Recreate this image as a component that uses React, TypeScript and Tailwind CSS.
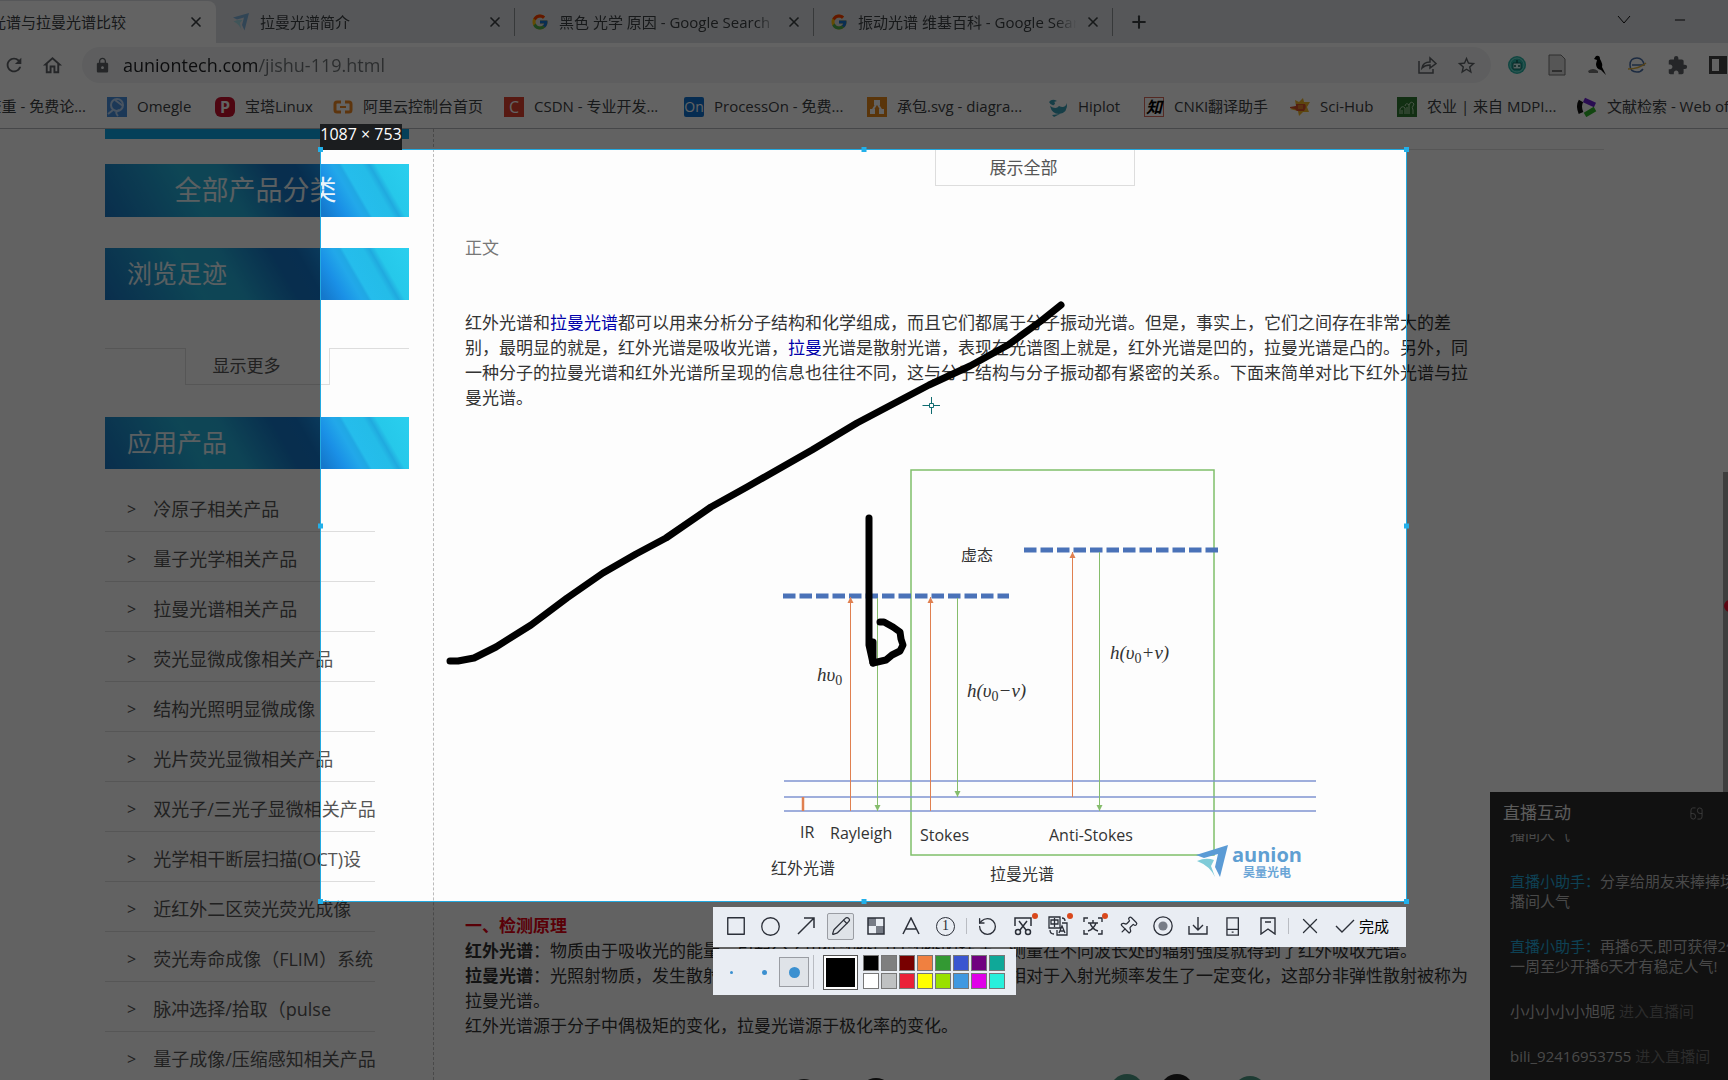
import type { ReactNode } from "react";
import {
  Check,
  Circle,
  CircleDot,
  Download,
  Minus,
  Pencil,
  Pin,
  Plus,
  RotateCcw,
  Square,
  X,
} from "lucide-react";
import { FcGoogle } from "react-icons/fc";
import { MdExtension, MdLock, MdOutlineHome, MdRefresh, MdStarBorder } from "react-icons/md";
import clsx from "clsx";

function AunionMark({ className }: { className?: string }) {
  return (
    <svg viewBox="0 0 32 36" className={className}>
      <path d="M0 9 L32 0 L23 35 L18 24 L22 9 L8 13 Z" fill="#7fb2dc" />
      <path d="M1 17 Q10 12 19 14 L14 20 L17 35 Q13 22 1 17 Z" fill="#a5dbe4" />
    </svg>
  );
}

const tabs = [
  { title: "拉曼光谱简介", icon: <AunionMark className="size-[18px]" /> },
  { title: "黑色 光学 原因 - Google Search", icon: <FcGoogle size={18} /> },
  { title: "振动光谱 维基百科 - Google Search", icon: <FcGoogle size={18} /> },
];

function TabStrip() {
  return (
    <div className="flex h-[43px] items-center bg-[#dee1e6] pt-px">
      <div className="flex h-full w-[216px] shrink-0 items-center justify-end rounded-tr-lg bg-white pr-3">
        <button className="whitespace-nowrap">红外光谱与拉曼光谱比较</button>
        <button aria-label="关闭标签页" className="ml-[62px]"><X size={16} strokeWidth={2.5} /></button>
      </div>
      {tabs.map((tab) => (
        <div key={tab.title} className="flex h-7 w-[299px] shrink-0 items-center border-r border-[#8f9296] pr-[11px] pl-4">
          {tab.icon}
          <button className="ml-[10px] min-w-0 flex-1 overflow-hidden mask-r-from-90% text-left whitespace-nowrap">{tab.title}</button>
          <button aria-label="关闭标签页" className="ml-2"><X size={16} strokeWidth={2.5} /></button>
        </div>
      ))}
      <button aria-label="打开新标签页" className="ml-4"><Plus size={20} strokeWidth={2.5} /></button>
      <div className="ml-auto flex items-center gap-[41px] pr-10 pb-1">
        <svg viewBox="0 0 14 8" className="w-[14px]" fill="none" stroke="#111"><path d="M1 0 L7 7 L13 0" /></svg>
        <Minus size={16} strokeWidth={1.5} color="#111" />
      </div>
    </div>
  );
}

function AddressBar() {
  return (
    <div className="flex h-[44px] items-center pl-[3px] text-[#5f6368]">
      <button aria-label="重新加载"><MdRefresh size={22} /></button>
      <button aria-label="主页" className="ml-4"><MdOutlineHome size={23} /></button>
      <div className="ml-[18px] flex h-9 flex-1 items-center rounded-full bg-[#f1f3f4] pr-[14px] pl-3">
        <MdLock size={17} />
        <input
          aria-label="地址栏"
          defaultValue="auniontech.com/jishu-119.html"
          className="ml-3 min-w-0 flex-1 bg-[linear-gradient(90deg,#202124_136px,#6f7377_136px)] bg-clip-text text-lg text-transparent outline-none"
        />
        <svg viewBox="0 0 20 20" className="mr-[19px] size-5" fill="none" stroke="#5f6368" strokeWidth="1.5">
          <path d="M2 6 V18 H16 V14" />
          <path d="M5 13 Q6 7 13 7 V3 L19 8.500 L13 13 V10 Q8 10 5 13 Z" />
        </svg>
        <MdStarBorder size={21} />
      </div>
      <div className="flex items-center gap-5 pl-4">
        <svg viewBox="0 0 20 20" className="size-5">
          <circle cx="10" cy="10" r="9" fill="#2bb5a8" />
          <circle cx="10" cy="10" r="7" fill="none" stroke="#7fe0d6" />
          <path d="M6 8 H14 V14 H6 Z" fill="#d9fffa" stroke="#0f6b66" />
          <path d="M7 11 H9 M11 11 H13 M10 5 V8" stroke="#0f5f5a" strokeWidth="1.5" />
        </svg>
        <svg viewBox="0 0 20 22" className="h-[22px] w-5" fill="none" stroke="#777">
          <path d="M2 1 H14 L18 5 V21 H2 Z" fill="#ddd" />
          <path d="M5 17 H15" strokeWidth="2" />
        </svg>
        <svg viewBox="0 0 20 20" className="size-5">
          <path d="M1 16 Q6 12 11 16 L11 18 H2 Z" fill="#777" />
          <path d="M9 1 Q13 0 13 4 Q16 9 15 12 L19 20 L14 15 Q9 14 9 9 L10 5 L7 4 Z" fill="#000" />
        </svg>
        <svg viewBox="0 0 20 20" className="size-5" fill="none" strokeWidth="1.5">
          <path d="M5 10 H17 Q16 3 10 3 Q3 3 3 10 Q3 17 10 17 Q14 17 16 14" stroke="#4a6fa8" />
          <path d="M1 14 Q12 14 19 8" stroke="#e0b03a" />
        </svg>
        <MdExtension size={21} />
        <svg viewBox="0 0 20 20" className="size-5"><path d="M1 1 H19 V19 H1 Z M4 4 V16 H11 V4 Z" fill="#444" fillRule="evenodd" /></svg>
      </div>
    </div>
  );
}

function Favicon({ bg, children }: { bg: string; children: ReactNode }) {
  return <span className={clsx("flex size-5 shrink-0 items-center justify-center text-base leading-5 text-white", bg)}>{children}</span>;
}

const bookmarks: { label: string; width: string; icon: ReactNode }[] = [
  {
    label: "Omegle",
    width: "w-[108px]",
    icon: (
      <Favicon bg="bg-[#4a90e0]">
        <svg viewBox="0 0 20 20" className="size-5" fill="none" stroke="#bcd8f8" strokeWidth="2">
          <circle cx="10" cy="8" r="6" />
          <path d="M12 13 Q7 15 11 19 M1 17 L6 13 M8 3 L16 9" />
        </svg>
      </Favicon>
    ),
  },
  { label: "宝塔Linux", width: "w-[118px]", icon: <Favicon bg="bg-[#c8102e] rounded-md font-bold">P</Favicon> },
  {
    label: "阿里云控制台首页",
    width: "w-[171px]",
    icon: (
      <svg viewBox="0 0 20 20" className="size-5 shrink-0" fill="none" stroke="#f08a24" strokeWidth="3">
        <path d="M8 5 H4 Q2 5 2 7 V13 Q2 15 4 15 H8 M12 5 H16 Q18 5 18 7 V13 Q18 15 16 15 H12" />
        <path d="M7 10 H13" strokeWidth="2" />
      </svg>
    ),
  },
  { label: "CSDN - 专业开发...", width: "w-[180px]", icon: <Favicon bg="bg-[#e0402f]">C</Favicon> },
  { label: "ProcessOn - 免费...", width: "w-[183px]", icon: <Favicon bg="bg-[#1173d0] rounded-xs"><span className="text-sm">On</span></Favicon> },
  {
    label: "承包.svg - diagra...",
    width: "w-[181px]",
    icon: (
      <Favicon bg="bg-[#e88a1a]">
        <svg viewBox="0 0 20 20" className="size-5">
          <path d="M10 6 L5 14 M10 6 L15 14" stroke="#fff" strokeWidth="2" />
          <path d="M7 3 H13 V8 H7 Z M3 12 H8 V17 H3 Z M12 12 H17 V17 H12 Z" fill="#fff" />
        </svg>
      </Favicon>
    ),
  },
  {
    label: "Hiplot",
    width: "w-[96px]",
    icon: (
      <svg viewBox="0 0 20 20" className="size-5 shrink-0" fill="#3aa0b8">
        <path d="M2 9 Q8 13 11 9 Q17 12 19 6 Q20 16 11 17 Q4 17 2 9 Z" />
        <path d="M1 5 Q4 1 9 4 L6 5 Q8 6 6 8 Q3 9 1 5 Z M4 18 L12 17 L6 20 Z" />
      </svg>
    ),
  },
  {
    label: "CNKI翻译助手",
    width: "w-[146px]",
    icon: <span className="flex size-5 shrink-0 items-center justify-center border border-[#d96a5a] text-base leading-4 font-bold text-black italic">知</span>,
  },
  {
    label: "Sci-Hub",
    width: "w-[107px]",
    icon: (
      <svg viewBox="0 0 20 20" className="size-5 shrink-0">
        <path d="M5 3 L9 5 L13 1 L14 5 L20 5 L17 10 L19 15 L13 15 L9 19 L8 14 L0 12 L6 9 Z" fill="#f0b428" />
        <path d="M0 10 L6 9 V7 H15 Q17 10 14 14 H7 L5 12 L0 11 Z" fill="#d9502a" />
        <path d="M8 9 H13 M8 11 H13" stroke="#f0b428" />
      </svg>
    ),
  },
  {
    label: "农业 | 来自 MDPI...",
    width: "w-[180px]",
    icon: (
      <Favicon bg="bg-[#2f7a33]">
        <svg viewBox="0 0 20 20" className="size-5" fill="none" stroke="#b9d9b4">
          <path d="M3 17 V12 Q5 8 8 11 V17 M8 9 Q9 5 12 8 V17 M12 8 Q14 3 17 7 Q14 11 16 13 V17 M5 17 V13 M10 17 V10" />
        </svg>
      </Favicon>
    ),
  },
  {
    label: "文献检索 - Web of Science",
    width: "w-[240px]",
    icon: (
      <svg viewBox="0 0 20 20" className="size-5 shrink-0" fill="none" strokeWidth="5">
        <path d="M4 4 Q1 9 4 16" stroke="#111" />
        <path d="M7 3 L18 8" stroke="#6a1fd0" />
        <path d="M8 18 L18 12" stroke="#30b52b" />
      </svg>
    ),
  },
];

function BookmarkBar() {
  return (
    <nav className="flex h-[42px] items-center overflow-hidden border-b border-[#b5b8bc] pb-[2px] whitespace-nowrap text-[#3c4043]">
      <a href="#" className="flex w-[107px] shrink-0 justify-end pr-[21px]">查重 - 免费论...</a>
      {bookmarks.map((b) => (
        <a key={b.label} href="#" className={clsx("flex shrink-0 items-center gap-[10px]", b.width)}>
          {b.icon}
          {b.label}
        </a>
      ))}
    </nav>
  );
}

function Banner({ title, main }: { title: string; main?: boolean }) {
  return (
    <h2
      className={clsx(
        "flex items-center bg-[linear-gradient(60deg,#1976c4_0%,#24b4dc_30%,#25b0dc_42%,#1678c8_58%,#1478cc_66%,#1a90e6_72%,#22a8ea_77%,#20a8e4_79%,#25bdec_80%,#24bce8_86%,#20aadf_88%,#26c8ea_90%,#2acfee_100%)] text-[#e8f4fa]",
        main ? "h-[53px] justify-center pr-[3px] text-[27px]" : "h-[52px] pl-[22px] text-[25px]"
      )}
    >
      {title}
    </h2>
  );
}

function MoreTab({ label, wide }: { label: string; wide?: boolean }) {
  return (
    <div className="flex">
      <div className={clsx("h-px bg-[#ddd]", wide ? "flex-1" : "w-20")} />
      <button className={clsx("h-[37px] border border-t-0 border-[#ddd] pr-[22px] text-[#555]", wide ? "w-[200px]" : "w-[145px]")}>
        {label}
      </button>
      <div className="h-px flex-1 bg-[#ddd]" />
    </div>
  );
}

const products = [
  "冷原子相关产品",
  "量子光学相关产品",
  "拉曼光谱相关产品",
  "荧光显微成像相关产品",
  "结构光照明显微成像",
  "光片荧光显微相关产品",
  "双光子/三光子显微相关产品",
  "光学相干断层扫描(OCT)设",
  "近红外二区荧光荧光成像",
  "荧光寿命成像（FLIM）系统",
  "脉冲选择/拾取（pulse",
  "量子成像/压缩感知相关产品",
];

function Sidebar() {
  return (
    <aside className="w-[304px] shrink-0 text-[#555]">
      <div className="h-[10px] bg-[#0da4e6]" />
      <div className="mt-[25px]"><Banner title="全部产品分类" main /></div>
      <div className="mt-[31px]"><Banner title="浏览足迹" /></div>
      <div className="mt-12"><MoreTab label="显示更多" /></div>
      <div className="mt-8"><Banner title="应用产品" /></div>
      <ul className="mt-[13px] w-[270px]">
        {products.map((p) => (
          <li key={p} className="h-[50px] border-b border-[#ddd]">
            <a href="#" className="flex h-full items-center gap-[17px] pt-1 pl-[22px] text-lg whitespace-nowrap">
              <span className="text-base">&gt;</span>
              {p}
            </a>
          </li>
        ))}
      </ul>
    </aside>
  );
}

function Arrow({ x, from, to, color }: { x: number; from: number; to: number; color: string }) {
  const d = to > from ? -6 : 6;
  return (
    <g stroke={color} fill={color}>
      <path d={`M${x} ${from} V${to}`} />
      <path d={`M${x} ${to} l-3 ${d} h6 Z`} stroke="none" />
    </g>
  );
}

function Formula({ x, y, sign }: { x: number; y: number; sign?: string }) {
  return (
    <text x={x} y={y} fontSize="19" fontStyle="italic" className="font-['Liberation_Serif',serif]">
      {sign ? "h(υ" : "hυ"}
      <tspan fontSize="14" fontStyle="normal" dy="4">0</tspan>
      {sign && <tspan dy="-4">{sign}v)</tspan>}
    </text>
  );
}

function RamanDiagram() {
  const orange = "#e08050";
  const green = "#86bd6c";
  return (
    <svg viewBox="465 410 1000 503" className="h-[503px] w-[1000px]" fill="#333" fontSize="16">
      <rect x="911" y="470" width="303" height="385" fill="none" stroke="#7fbf6a" strokeWidth="1.500" />
      <g stroke="#4a72b8" strokeWidth="5" strokeDasharray="12.500 4">
        <path d="M783 596 H1009" />
        <path d="M1024 550 H1220" />
      </g>
      <g stroke="#7f93d0" strokeWidth="1.500">
        <path d="M784 781 H1316" />
        <path d="M784 797 H1316" />
        <path d="M784 811 H1316" />
      </g>
      <path d="M803 797 V811" stroke={orange} strokeWidth="2.500" />
      <Arrow x={850.5} from={811} to={597} color={orange} />
      <Arrow x={877.5} from={598} to={811} color={green} />
      <Arrow x={930.5} from={811} to={597} color={orange} />
      <Arrow x={957.5} from={598} to={797} color={green} />
      <Arrow x={1072.5} from={797} to={552} color={orange} />
      <Arrow x={1099.5} from={552} to={811} color={green} />
      <Formula x={817} y={681} />
      <Formula x={967} y={697} sign="−" />
      <Formula x={1110} y={659} sign="+" />
      <text x="961" y="561">虚态</text>
      <text x="800" y="838">IR</text>
      <text x="830" y="839">Rayleigh</text>
      <text x="920" y="841">Stokes</text>
      <text x="1049" y="841">Anti-Stokes</text>
      <text x="771" y="874">红外光谱</text>
      <text x="990" y="880">拉曼光谱</text>
      <path d="M1196 855 L1228 845 L1220 877 L1215 867 L1218 854 L1204 858 Z" fill="#5b9bd5" />
      <path d="M1197 861 Q1206 857 1214 860 L1211 866 L1215 877 Q1210 866 1197 861 Z" fill="#7fcbd8" />
      <text x="1232" y="862" fontSize="20" fontWeight="700" fill="#5f9fd2">aunion</text>
      <text x="1243" y="877" fontSize="12" fontWeight="700" fill="#6aa5d6">昊量光电</text>
    </svg>
  );
}

function Article() {
  return (
    <main className="min-w-0 flex-1 overflow-hidden border-l border-dashed border-[#bbb] pt-5 pl-[31px] leading-[25px] whitespace-nowrap text-[#333]">
      <div className="pr-[124px] text-[#666]"><MoreTab label="展示全部" wide /></div>
      <p className="mt-[49px] text-[#777]">正文</p>
      <p className="mt-[50px]">
        红外光谱和<a href="#" className="text-[#00a]">拉曼光谱</a>都可以用来分析分子结构和化学组成，而且它们都属于分子振动光谱。但是，事实上，它们之间存在非常大的差<br />
        别，最明显的就是，红外光谱是吸收光谱，<a href="#" className="text-[#00a]">拉曼</a>光谱是散射光谱，表现在光谱图上就是，红外光谱是凹的，拉曼光谱是凸的。另外，同<br />
        一种分子的拉曼光谱和红外光谱所呈现的信息也往往不同，这与分子结构与分子振动都有紧密的关系。下面来简单对比下红外光谱与拉<br />
        曼光谱。
      </p>
      <RamanDiagram />
      <h3 className="font-bold text-[#e60012]">一、检测原理</h3>
      <p>
        <b>红外光谱</b>：物质由于吸收光的能量，引起分子由低能级向高能级的跃迁，测量在不同波长处的辐射强度就得到了红外吸收光谱。<br />
        <b>拉曼光谱</b>：光照射物质，发生散射的时候，其中会有一部分散射光的频率相对于入射光频率发生了一定变化，这部分非弹性散射被称为<br />
        拉曼光谱。<br />
        红外光谱源于分子中偶极矩的变化，拉曼光谱源于极化率的变化。
      </p>
      <svg viewBox="465 1074 1000 40" className="mt-[36px] h-[40px] w-[1000px]">
        <circle cx="804" cy="1096" r="17" fill="#333" />
        <circle cx="876" cy="1095" r="17" fill="#222" />
        <circle cx="1127" cy="1091" r="17" fill="#4f9c86" />
        <circle cx="1177" cy="1091" r="17" fill="#222" />
        <circle cx="1250" cy="1093" r="17" fill="#4f9c86" />
      </svg>
    </main>
  );
}

function LiveChat() {
  return (
    <section className="absolute right-0 bottom-0 h-[288px] w-[238px] overflow-hidden bg-[#2c2c2c] text-[15px] leading-5 whitespace-nowrap text-[#bbb]">
      <header className="flex h-[42px] items-center pr-[25px] pl-[13px] text-[17px] text-[#eee]">
        <h2>直播互动</h2>
        <svg viewBox="0 0 14 14" className="ml-auto w-[13px]" fill="none" stroke="#999">
          <path d="M6 1 H3 Q1 1 1 4 V11 Q1 13 4 13 Q6 13 6 10 Q6 7 3 7 H1 M8 13 H11 Q13 13 13 10 V3 Q13 1 10 1 Q8 1 8 4 Q8 7 11 7 H13" />
        </svg>
      </header>
      <div className="pl-5">
        <div className="flex h-[10px] items-end overflow-hidden">播间人气</div>
        <p className="mt-[27px]">
          <span className="text-[#25a8d8]">直播小助手：</span>分享给朋友来捧捧场，提升直<br />播间人气
        </p>
        <p className="mt-[25px]">
          <span className="text-[#25a8d8]">直播小助手：</span>再播6天,即可获得2倍<br />一周至少开播6天才有稳定人气!
        </p>
        <p className="mt-[25px]">小小小小小旭呢 <span className="text-[#707070]">进入直播间</span></p>
        <p className="mt-[25px]">bili_92416953755 <span className="text-[#707070]">进入直播间</span></p>
      </div>
    </section>
  );
}

function Tool({ label, active, hot, children }: { label: string; active?: boolean; hot?: boolean; children: ReactNode }) {
  return (
    <button aria-label={label} className="relative flex h-10 w-[35px] items-center justify-center">
      <span className={clsx("flex size-[27px] items-center justify-center", active && "rounded-xs border border-[#9a9da3] bg-[#dfe3e8]")}>
        {children}
      </span>
      {hot && <span className="absolute top-[7px] right-[2px] size-[6px] rounded-full bg-[#d9481c]" />}
    </button>
  );
}

function Divider() {
  return <span className="mx-[3px] h-4 w-px bg-[#b9bcc2]" />;
}

const swatches = [
  ["黑", "bg-black"],
  ["灰", "bg-[#7f7f7f]"],
  ["深红", "bg-[#780000]"],
  ["橙", "bg-[#f08040]"],
  ["绿", "bg-[#339933]"],
  ["蓝", "bg-[#3a55d0]"],
  ["紫", "bg-[#70007f]"],
  ["青", "bg-[#0fa898]"],
  ["白", "bg-white"],
  ["浅灰", "bg-[#bfc1c2]"],
  ["红", "bg-[#ea2038]"],
  ["黄", "bg-[#ffff00]"],
  ["浅绿", "bg-[#99e000]"],
  ["浅蓝", "bg-[#4098e0]"],
  ["品红", "bg-[#e000e8]"],
  ["浅青", "bg-[#28f0dc]"],
];

function CaptureTools() {
  return (
    <div className="absolute top-[757px] right-0 flex w-[693px] flex-col items-start gap-[2px] text-[#2b2f38]">
      <div className="flex h-10 w-full items-center bg-[#e9edf3] pb-[2px] pl-[5px]">
        <Tool label="矩形"><Square size={22} strokeWidth={1.5} className="[&>rect]:[rx:0]" /></Tool>
        <Tool label="椭圆"><Circle size={21} strokeWidth={1.5} /></Tool>
        <Tool label="箭头">
          <svg viewBox="0 0 18 18" className="size-[18px]" fill="none" stroke="#2b2f38" strokeWidth="1.500">
            <path d="M1 17 L17 1 M7 1 H17 V11" />
          </svg>
        </Tool>
        <Tool label="画笔" active><Pencil size={20} strokeWidth={1.5} /></Tool>
        <Tool label="马赛克">
          <svg viewBox="0 0 18 18" className="size-[18px]">
            <path d="M1 1 H9 V9 H1 Z M9 9 H17 V17 H9 Z" fill="#777c86" />
            <rect x="1" y="1" width="16" height="16" fill="none" stroke="#2b2f38" strokeWidth="1.500" />
          </svg>
        </Tool>
        <Tool label="文字">
          <svg viewBox="0 0 18 18" className="size-[18px]" fill="none" stroke="#2b2f38" strokeWidth="1.500">
            <path d="M1 17 L9 1 L17 17 M4 12 H14" />
          </svg>
        </Tool>
        <Tool label="序号">
          <span className="flex size-[19px] items-center justify-center rounded-full border border-[#2b2f38] font-['Liberation_Serif',serif] text-sm leading-4">1</span>
        </Tool>
        <Divider />
        <Tool label="撤销"><RotateCcw size={21} strokeWidth={1.5} /></Tool>
        <Tool label="截图" hot>
          <svg viewBox="0 0 20 20" className="size-5" fill="none" stroke="#2b2f38" strokeWidth="1.500">
            <path d="M2 10 V2 H18 V10 M6 5 L13 14 M14 5 L7 14" />
            <circle cx="5" cy="16" r="2.500" />
            <circle cx="15" cy="16" r="2.500" />
          </svg>
        </Tool>
        <Tool label="翻译" hot>
          <svg viewBox="0 0 20 20" className="size-5" fill="none" stroke="#2b2f38" strokeWidth="1.300">
            <path d="M1 1 H12 V12 H1 Z M3 4 H10 V8 H3 Z M6.500 2 V11 M14 7 H19 V19 H9 V14 M14 2 Q17 2 17 5 M2 14 Q2 18 6 18 M11 17 L14 10 L17 17 M12 15 H16" />
          </svg>
        </Tool>
        <Tool label="识别文字" hot>
          <svg viewBox="0 0 20 20" className="size-5" fill="none" stroke="#2b2f38" strokeWidth="1.400">
            <path d="M1 6 V2 H5 M15 2 H19 V6 M19 14 V18 H15 M5 18 H1 V14 M5 7 H15 M10 4 V7 M7 7 Q9 13 15 15 M13 7 Q11 13 5 15" />
          </svg>
        </Tool>
        <Tool label="钉在桌面"><Pin size={20} strokeWidth={1.5} className="rotate-45" /></Tool>
        <Tool label="录屏"><CircleDot size={22} strokeWidth={1.4} className="[&>circle:last-child]:[r:5px] [&>circle:last-child]:fill-[#777c86] [&>circle:last-child]:stroke-none" /></Tool>
        <Tool label="保存">
          <svg viewBox="0 0 20 18" className="w-5" fill="none" stroke="#2b2f38" strokeWidth="1.400">
            <path d="M1 9 V17 H19 V9 M10 0 V13 M5 8 L10 13 L15 8" />
          </svg>
        </Tool>
        <Tool label="发送到手机">
          <svg viewBox="0 0 14 20" className="h-[19px]" fill="none" stroke="#2b2f38" strokeWidth="1.400">
            <path d="M1 1 H13 V19 H1 Z M1 13 H13 M6 16 H8" />
          </svg>
        </Tool>
        <Tool label="收藏">
          <svg viewBox="0 0 16 18" className="h-[18px]" fill="none" stroke="#2b2f38" strokeWidth="1.400">
            <path d="M1 1 H15 V17 L8 12 L1 17 Z M5 5 H11" />
          </svg>
        </Tool>
        <Divider />
        <Tool label="退出"><X size={26} strokeWidth={1.2} /></Tool>
        <button className="ml-2 flex items-center gap-1 text-[15px] text-black">
          <svg viewBox="0 0 20 16" className="w-5" fill="none" stroke="#2b2f38" strokeWidth="1.400"><path d="M1 8 L7 14 L19 2" /></svg>
          完成
        </button>
      </div>
      <div className="flex h-[46px] w-[303px] items-center bg-[#e9edf3]">
        <button aria-label="细" className="flex h-8 w-9 items-center justify-center"><span className="size-[3px] rounded-full bg-[#3b90d0]" /></button>
        <button aria-label="中" className="flex h-8 w-[30px] items-center justify-center"><span className="size-[5px] rounded-full bg-[#3b90d0]" /></button>
        <button aria-label="粗" className="flex size-[30px] items-center justify-center border border-[#9a9da3] bg-[#dfe3e8]"><span className="size-[11px] rounded-full bg-[#3b90d0]" /></button>
        <span className="mx-[4px] h-[34px] w-px bg-[#b9bcc2]" />
        <span className="ml-[5px] size-[35px] border border-[#555] bg-white p-[2px]"><span className="block h-full bg-black" /></span>
        <div className="ml-[5px] grid grid-cols-8 gap-[2px]">
          {swatches.map(([name, color]) => (
            <button key={name} aria-label={name} className={clsx("size-4 border border-[#777]", color)} />
          ))}
        </div>
      </div>
    </div>
  );
}

const handles = [
  "-top-[3px] -left-[3px]",
  "-top-[3px] left-1/2 -translate-x-1/2",
  "-top-[3px] -right-[3px]",
  "top-1/2 -left-[3px] -translate-y-1/2",
  "top-1/2 -right-[3px] -translate-y-1/2",
  "-bottom-[3px] -left-[3px]",
  "-bottom-[3px] left-1/2 -translate-x-1/2",
  "-right-[3px] -bottom-[3px]",
];

function Capture() {
  return (
    <div className="absolute top-[149px] left-[320px] h-[753px] w-[1087px] border border-[#22a9e0] shadow-[0_0_0_2400px_rgba(0,0,0,0.61)]">
      <div className="absolute bottom-full -left-px flex h-[26px] w-[82px] items-center justify-center bg-[#1b1d1f] pb-[6px] text-base whitespace-nowrap text-white">
        1087 × 753
      </div>
      <svg viewBox="321 150 1085 751" className="block size-full" fill="none" stroke="#000" strokeWidth="7" strokeLinecap="round" strokeLinejoin="round">
        <path d="M450 661 H458 L474 658 L496 647 L531 625 L567 598 L603 573 L636 554 L666 538 L711 507 L747 487 L812 450 L857 423 L929 385 L970 366 L1008 345 L1041 321 L1061 305" />
        <path d="M869 518 V645 L873 663 V642" />
        <path d="M880 622 L884 622 L893 627 L900 632 L901 639 L903 645 L900 651 L892 655 L886 660 L873 663" />
        <g stroke="#0f6b70" strokeWidth="1" strokeLinecap="butt">
          <path d="M922.500 405.500 H929 M933 405.500 H940 M931.500 397 V403 M931.500 408 V414" />
          <rect x="929.500" y="403.500" width="4" height="4" />
        </g>
      </svg>
      {handles.map((pos) => (
        <span key={pos} className={clsx("absolute size-[5px] bg-[#22b0ea]", pos)} />
      ))}
      <CaptureTools />
    </div>
  );
}

export default function App() {
  return (
    <div className="relative flex h-screen flex-col overflow-hidden bg-[#fdfdfd] font-['Open_Sans','Noto_Sans_CJK_SC',sans-serif] text-[17px]">
      <header className="bg-white text-[15px] text-[#3c4043]">
        <TabStrip />
        <AddressBar />
        <BookmarkBar />
      </header>
      <div className="flex min-h-0 flex-1 overflow-hidden pl-[105px]">
        <Sidebar />
        <div className="ml-6 flex min-w-0 flex-1"><Article /></div>
      </div>
      <div className="absolute top-[472px] right-0 h-[320px] w-[5px] bg-[#a0a0a0]" />
      <div className="absolute top-[600px] -right-2 size-3 rounded-full bg-[#f01030]" />
      <LiveChat />
      <Capture />
    </div>
  );
}
